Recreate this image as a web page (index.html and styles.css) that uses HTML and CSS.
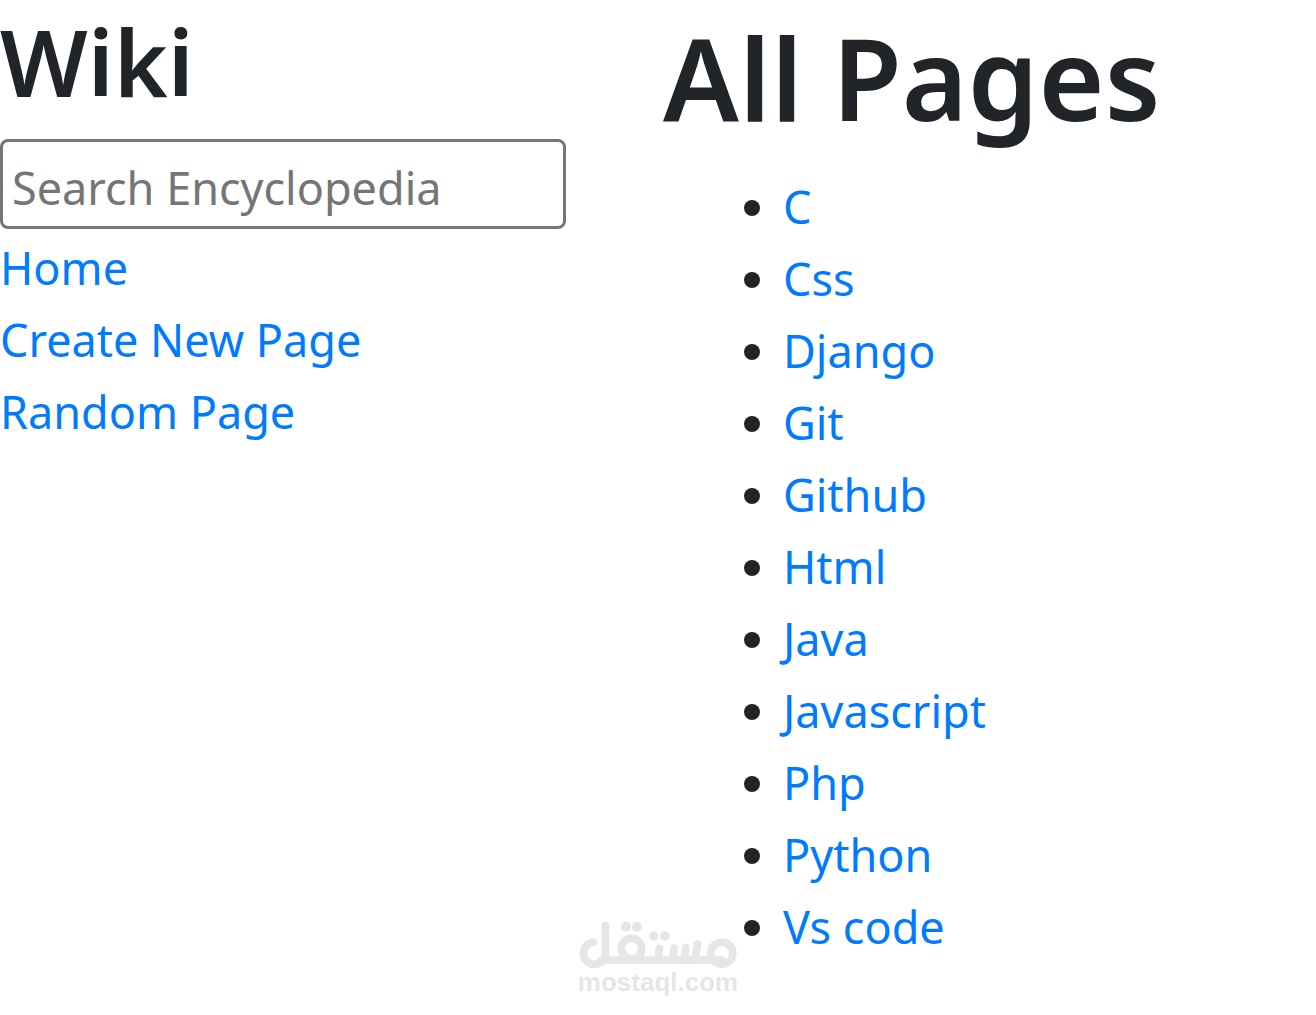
FILE: index.html
```html
<!DOCTYPE html>
<html lang="en">
<head>
  <meta charset="UTF-8">
  <meta name="viewport" content="width=device-width, initial-scale=1">
  <title>Encyclopedia</title>
  <link rel="stylesheet" href="styles.css">
</head>
<body>
  <div class="row">
    <div class="sidebar">
      <h2>Wiki</h2>
      <form>
        <input class="search" type="text" name="q" placeholder="Search Encyclopedia" aria-label="Search Encyclopedia">
      </form>
      <div><a href="#">Home</a></div>
      <div><a href="#">Create New Page</a></div>
      <div><a href="#">Random Page</a></div>
    </div>
    <div class="main">
      <h1>All Pages</h1>
      <ul>
        <li><a href="#">C</a></li>
        <li><a href="#">Css</a></li>
        <li><a href="#">Django</a></li>
        <li><a href="#">Git</a></li>
        <li><a href="#">Github</a></li>
        <li><a href="#">Html</a></li>
        <li><a href="#">Java</a></li>
        <li><a href="#">Javascript</a></li>
        <li><a href="#">Php</a></li>
        <li><a href="#">Python</a></li>
        <li><a href="#">Vs code</a></li>
      </ul>
    </div>
  </div>
  <div class="watermark">
    <svg class="watermark-logo" viewBox="54 28 480 150" aria-hidden="true">
      <g fill="none" stroke="currentColor" stroke-width="23" stroke-linecap="round">
        <path d="M101 98 A33 33 0 1 0 137 131 V48" />
        <path d="M126 151 H487" />
        <circle cx="215" cy="117" r="31" />
        <circle cx="486" cy="131" r="33" />
        <path d="M299 116 L295 150 M343 116 L338 150 M378 114 L373 150 M413 103 L405 150" />
      </g>
      <g fill="currentColor">
        <circle cx="199" cy="51" r="15" />
        <circle cx="231" cy="51" r="15" />
        <circle cx="282" cy="79" r="14" />
        <circle cx="315" cy="79" r="14" />
      </g>
    </svg>
    <span>mostaql.com</span>
  </div>
</body>
</html>
```

FILE: styles.css
```css
* {
  box-sizing: border-box;
}

body {
  margin: 0;
  font-family: "Segoe UI", "Noto Sans", "Open Sans", sans-serif;
  font-size: 45px;
  line-height: 72px;
  color: #212529;
  background-color: #fff;
}

h1,
h2 {
  margin: 0;
  font-weight: 600;
}

h1 {
  padding-bottom: 17px;
  font-size: 113px;
  line-height: 154px;
}

h2 {
  padding-bottom: 15px;
  font-size: 92px;
  line-height: 124px;
}

a {
  color: #007bff;
  text-decoration: none;
}

a:hover {
  text-decoration: underline;
}

ul {
  margin: 0 0 48px;
  padding-left: 120px;
}

.row {
  display: grid;
  grid-template-columns: 1fr 1fr;
}

.main {
  padding-left: 5px;
}

form {
  margin-bottom: 3px;
}

.search {
  display: block;
  width: 86%;
  height: 90px;
  padding: 6px 9px 0;
  border: 3px solid #767676;
  border-radius: 8px;
  font: inherit;
}

.search::placeholder {
  color: #757575;
}

.watermark {
  position: fixed;
  bottom: 20px;
  left: 50%;
  display: flex;
  flex-direction: column;
  align-items: center;
  transform: translateX(-50%);
  font-family: "Liberation Sans", Arial, sans-serif;
  font-size: 26px;
  font-weight: bold;
  line-height: 26px;
  color: #e6e6e6;
}

.watermark-logo {
  width: 160px;
  height: 50px;
}
```
